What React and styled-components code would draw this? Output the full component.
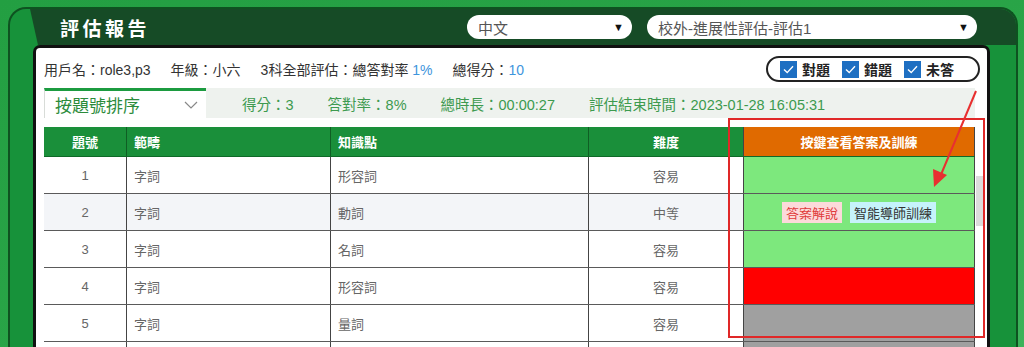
import styled, { createGlobalStyle } from "styled-components";

const GlobalStyle = createGlobalStyle`
  html, body {
    margin: 0;
    padding: 0;
    height: 100%;
    overflow: hidden;
  }
  body {
    background: linear-gradient(160deg, #239f42 0%, #2aa548 60%, #3cb35a 100%);
    font-family: "Liberation Sans", "Noto Sans CJK TC", sans-serif;
  }
`;

const Page = styled.div`
  position: relative;
  padding: 7px 0 0 8px;
  height: 347px;
  box-sizing: border-box;
`;

const Frame = styled.div`
  width: 1010px;
  height: 360px;
  box-sizing: border-box;
  background: #17923a;
  border: 2px solid #0e5220;
  border-bottom: none;
  border-radius: 18px 18px 0 0;
  padding: 0 26px 0 23px;
`;

const TitleBar = styled.div`
  display: flex;
  align-items: center;
  height: 36px;
  margin: 0 -26px 0 -23px;
  padding: 0 39px 0 50px;
  background: #164b26;
  border-radius: 16px 16px 0 0;
  clip-path: polygon(20px 0, 100% 0, 100% 100%, 28px 100%);
`;

const Title = styled.div`
  color: #fff;
  font-size: 19px;
  font-weight: bold;
  letter-spacing: 3.5px;
  flex: 1;
`;

const Select = styled.div`
  display: flex;
  align-items: center;
  justify-content: space-between;
  box-sizing: border-box;
  width: ${(p) => p.$w}px;
  height: 24px;
  margin-left: ${(p) => p.$ml || 0}px;
  padding: 0 8px 0 11px;
  background: #fff;
  border-radius: 12px;
  color: #555;
  font-size: 15px;
`;

const Caret = styled.span`
  font-size: 11px;
  color: #111;
`;

const Card = styled.div`
  background: #fff;
  border: 3px solid #111;
  border-bottom: none;
  border-radius: 7px 7px 0 0;
  height: 320px;
  padding: 0 12px 0 8px;
  position: relative;
`;

const InfoRow = styled.div`
  display: flex;
  align-items: center;
  justify-content: space-between;
  height: 34px;
  padding-top: 8px;
  box-sizing: border-box;
  margin-right: -5px;
`;

const InfoText = styled.div`
  font-size: 14px;
  color: #333;
  span + span {
    margin-left: 20px;
  }
`;

const Num = styled.b`
  font-weight: normal;
  color: #3e95dd;
`;

const FilterPill = styled.div`
  display: flex;
  align-items: center;
  gap: 12px;
  height: 26px;
  box-sizing: border-box;
  border: 2px solid #222;
  border-radius: 14px;
  padding: 0 24px 0 12px;
`;

const Check = styled.label`
  display: flex;
  align-items: center;
  gap: 5px;
  font-size: 14px;
  font-weight: bold;
  color: #222;
`;

const Box = styled.span`
  display: inline-flex;
  align-items: center;
  justify-content: center;
  width: 17px;
  height: 17px;
  background: #1e6fc2;
`;

const TabRow = styled.div`
  display: flex;
  align-items: center;
  height: 30px;
  margin-top: 6px;
  background: #eef2ee;
`;

const Tab = styled.div`
  display: flex;
  align-items: center;
  justify-content: space-between;
  box-sizing: border-box;
  width: 162px;
  height: 30px;
  padding: 0 8px 0 10px;
  background: #fff;
  border-top: 3px solid #1c9b40;
  border-left: 1px solid #d8dcd8;
  color: #2b8b3b;
  font-size: 17px;
`;

const Stat = styled.span`
  color: #3d9a4f;
  font-size: 14.5px;
  margin-left: ${(p) => p.$ml}px;
`;

const Table = styled.div`
  margin-top: 9px;
  width: 931px;
`;

const Row = styled.div`
  display: grid;
  grid-template-columns: 82px 204px 258px 155px 232px;
  height: ${(p) => (p.$head ? 30 : 37)}px;
  background: ${(p) => (p.$head ? "#1a8f3a" : p.$alt ? "#f3f5f8" : "#fff")};
  border-bottom: 1px solid ${(p) => (p.$head ? "#0f6a28" : "#5a5a5a")};
  box-sizing: border-box;
`;

const Cell = styled.div`
  display: flex;
  align-items: center;
  justify-content: ${(p) => (p.$center ? "center" : "flex-start")};
  padding-left: ${(p) => (p.$center ? 0 : 7)}px;
  font-size: 13px;
  color: ${(p) => (p.$head ? "#fff" : "#666")};
  font-weight: ${(p) => (p.$head ? "bold" : "normal")};
  border-left: ${(p) => (p.$line ? `1px solid ${p.$head ? "#0f5e24" : "#444"}` : "none")};
`;

const ActionCell = styled.div`
  display: flex;
  align-items: center;
  justify-content: center;
  gap: 8px;
  background: ${(p) => p.$bg};
  border-left: 1px solid #444;
  border-right: 1px solid #444;
  font-size: 13px;
  font-weight: ${(p) => (p.$head ? "bold" : "normal")};
  color: #fff;
`;

const Btn = styled.span`
  padding: 1px 4px;
  font-size: 13px;
  background: ${(p) => p.$bg};
  color: ${(p) => p.$color};
`;

const Scroll = styled.div`
  position: absolute;
  right: 3px;
  top: 128px;
  width: 8px;
  height: 50px;
  background: #dcdcdc;
`;

const Annotation = styled.div`
  position: absolute;
  left: 728px;
  top: 118px;
  width: 257px;
  height: 220px;
  box-sizing: border-box;
  border: 2px solid #e02828;
  pointer-events: none;
`;

const Arrow = styled.svg`
  position: absolute;
  left: 920px;
  top: 85px;
`;

const rows = [
  { no: 1, topic: "形容詞", level: "容易", bg: "#7de87d" },
  { no: 2, topic: "動詞", level: "中等", bg: "#7de87d", btns: true },
  { no: 3, topic: "名詞", level: "容易", bg: "#7de87d" },
  { no: 4, topic: "形容詞", level: "容易", bg: "#ff0000" },
  { no: 5, topic: "量詞", level: "容易", bg: "#a0a0a0" },
  { no: "", topic: "", level: "", bg: "#a0a0a0", partial: true },
];

function Tick() {
  return (
    <svg width="13" height="13" viewBox="0 0 13 13">
      <path d="M2 6.5 L5.2 9.6 L11 3.2" fill="none" stroke="#fff" strokeWidth="1.4" />
    </svg>
  );
}

export default function App() {
  return (
    <>
      <GlobalStyle />
      <Page>
        <Frame>
          <TitleBar>
            <Title>評估報告</Title>
            <Select $w={165}>
              中文<Caret>▼</Caret>
            </Select>
            <Select $w={330} $ml={15}>
              校外-進展性評估-評估1<Caret>▼</Caret>
            </Select>
          </TitleBar>
          <Card>
            <InfoRow>
              <InfoText>
                <span>用戶名：role3,p3</span>
                <span>年級：小六</span>
                <span>
                  3科全部評估：總答對率 <Num>1%</Num>
                </span>
                <span>
                  總得分：<Num>10</Num>
                </span>
              </InfoText>
              <FilterPill>
                {["對題", "錯題", "未答"].map((t) => (
                  <Check key={t}>
                    <Box>
                      <Tick />
                    </Box>
                    {t}
                  </Check>
                ))}
              </FilterPill>
            </InfoRow>
            <TabRow>
              <Tab>
                按題號排序
                <svg width="14" height="10" viewBox="0 0 14 10">
                  <path d="M1 2 L7 8 L13 2" fill="none" stroke="#888" strokeWidth="1.2" />
                </svg>
              </Tab>
              <Stat $ml={36}>得分：3</Stat>
              <Stat $ml={34}>答對率：8%</Stat>
              <Stat $ml={34}>總時長：00:00:27</Stat>
              <Stat $ml={34}>評估結束時間：2023-01-28 16:05:31</Stat>
            </TabRow>
            <Table>
              <Row $head>
                <Cell $head $center>題號</Cell>
                <Cell $head $line>範疇</Cell>
                <Cell $head $line>知識點</Cell>
                <Cell $head $line $center>難度</Cell>
                <ActionCell $head $bg="#e06a00">按鍵查看答案及訓練</ActionCell>
              </Row>
              {rows.map((r, i) => (
                <Row key={i} $alt={i === 1}>
                  <Cell $center>{r.no}</Cell>
                  <Cell $line>{r.partial ? "" : "字詞"}</Cell>
                  <Cell $line>{r.topic}</Cell>
                  <Cell $line $center>{r.level}</Cell>
                  <ActionCell $bg={r.bg}>
                    {r.btns && (
                      <>
                        <Btn $bg="#fcdada" $color="#e03a3a">答案解說</Btn>
                        <Btn $bg="#c6f3fb" $color="#333">智能導師訓練</Btn>
                      </>
                    )}
                  </ActionCell>
                </Row>
              ))}
            </Table>
            <Scroll />
          </Card>
        </Frame>
        <Annotation />
        <Arrow width="70" height="110" viewBox="0 0 70 110">
          <line x1="56" y1="6" x2="20" y2="92" stroke="#e83030" strokeWidth="2" />
          <path d="M14 102 L13 84 L27 90 Z" fill="#e83030" />
        </Arrow>
      </Page>
    </>
  );
}
